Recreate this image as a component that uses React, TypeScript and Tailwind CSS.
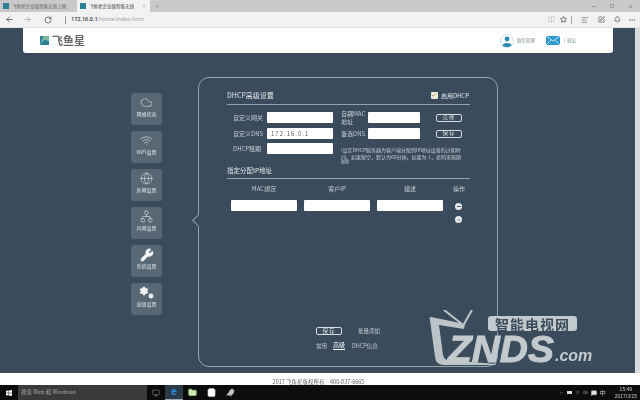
import { ArrowLeft, ArrowRight, RotateCw, Star, BookOpen, Minus, Square, X, Plus, Cloud, Wifi, Globe, Network, Wrench, Settings, Check, AlignLeft, PenSquare, Bell, MoreHorizontal, ChevronUp, Monitor, Volume2, MessageSquare, Folder, ShoppingBag, Bird } from "lucide-react";

const cjk = { fontFamily: '"Noto Sans CJK SC", "Liberation Sans", sans-serif' };

function Field({ w = "w-[66px]", h = "h-[11px]", children }: { w?: string; h?: string; children?: React.ReactNode }) {
  return <div className={`${w} ${h} bg-white rounded-[1px] flex items-center pl-[4px] text-[6px] tracking-[1px] text-[#5a6670]`}>{children}</div>;
}
function Lbl({ w, children }: { w: string; children: React.ReactNode }) {
  return <div className={`${w} text-[6px] leading-[8px] text-[#c3cbd1]`}>{children}</div>;
}
function Btn({ children }: { children: React.ReactNode }) {
  return <div className="w-[26px] h-[8px] border border-[#d5dbdf] rounded-[2px] flex items-center justify-center text-[5.5px] tracking-[1px] text-[#d5dbdf]">{children}</div>;
}
function Gears() {
  return (
    <div className="relative w-[15px] h-[13px]">
      <Settings size={10} strokeWidth={2} className="fill-white" />
      <Settings size={6} strokeWidth={2} className="absolute right-0 bottom-0 fill-white" />
    </div>
  );
}
function Spanner() {
  return <Wrench size={14} strokeWidth={2} className="fill-white -my-[0.5px]" />;
}
function CloudIcon() {
  return <Cloud size={13} strokeWidth={1.1} />;
}
function WifiIcon() {
  return <Wifi size={13} strokeWidth={1.2} />;
}
function GlobeIcon() {
  return <Globe size={13} strokeWidth={1.1} />;
}
function NetIcon() {
  return <Network size={13} strokeWidth={1.1} />;
}
const side = [
  { I: CloudIcon, t: "网络状态" },
  { I: WifiIcon, t: "WiFi设置" },
  { I: GlobeIcon, t: "外网设置" },
  { I: NetIcon, t: "内网设置" },
  { I: Spanner, t: "系统设置" },
  { I: Gears, t: "高级设置" },
];

export default function App() {
  return (
    <div className="w-[640px] h-[400px] overflow-hidden flex flex-col relative blur-[0.35px]" style={cjk}>
      {/* tab strip */}
      <div className="h-[12px] bg-[#c9c9c9] flex items-center shrink-0">
        <div className="w-[77px] h-full flex items-center pl-[3px] gap-[3px] text-[4.5px] text-[#666]">
          <div className="w-[6px] h-[6px] bg-[#2d7f94]" />飞鱼星企业级智能无线上网
        </div>
        <div className="w-[73px] h-full bg-[#f2f2f2] flex items-center pl-[3px] gap-[3px] text-[4.5px] text-[#444]">
          <div className="w-[6px] h-[6px] bg-[#2d7f94]" />飞鱼星企业级智能无线
          <X size={4} className="ml-[5px] text-[#777]" />
        </div>
        <Plus size={5} className="ml-[5px] text-[#8a8a8a]" />
        <div className="ml-auto flex items-center gap-[14px] pr-[7px] text-[#555]">
          <Minus size={5} />
          <Square size={4} />
          <X size={5} />
        </div>
      </div>
      {/* address bar */}
      <div className="h-[16px] bg-[#f2f2f2] flex items-center shrink-0 text-[#444] border-b border-[#e0e0e0]">
        <ArrowLeft size={9} className="ml-[5px]" />
        <ArrowRight size={9} className="ml-[9px] text-[#aaa]" />
        <RotateCw size={8} className="ml-[12px]" />
        <div className="w-px h-[8px] bg-[#999] ml-[13px]" />
        <div className="ml-[5px] text-[5.5px]" style={{ fontFamily: '"Open Sans", sans-serif' }}>
          <span className="text-[#333] font-semibold">172.16.0.1</span><span className="text-[#999]">/home/index.html</span>
        </div>
        <div className="ml-auto flex items-center pr-[4px]">
          <BookOpen size={7} className="text-[#bbb]" />
          <Star size={7} className="ml-[5px] text-[#222]" />
          <div className="w-px h-[8px] bg-[#aaa] ml-[4px]" />
          <AlignLeft size={8} className="ml-[9px] text-[#666]" />
          <PenSquare size={7} className="ml-[9px] text-[#444]" />
          <Bell size={7} className="ml-[9px] text-[#444]" />
          <MoreHorizontal size={8} className="ml-[7px] text-[#777]" />
        </div>
      </div>
      {/* page */}
      <div className="flex-1 bg-[#3a4b5b] flex flex-col min-h-0 relative">
        <div className="flex flex-1 min-h-0">
          <div className="flex-1 flex flex-col min-w-0">
            {/* header */}
            <div className="ml-[23px] w-[590px] h-[25px] bg-white rounded-b-[3px] flex items-center shrink-0">
              <svg viewBox="0 0 10 10" className="ml-[17px] w-[9px] h-[9px]">
                <rect width="10" height="10" fill="#2a8296" />
                <path d="M0 10 L5 4 L10 6 V0 H4 Z" fill="#7fb8a0" />
              </svg>
              <div className="ml-[3px] text-[11px] leading-none font-bold text-[#666]">飞鱼星</div>
              <svg viewBox="0 0 14 14" className="ml-auto w-[14px] h-[14px]">
                <circle cx="7" cy="7" r="6.5" fill="#fff" stroke="#b8d4e4" strokeWidth="0.7" />
                <circle cx="7" cy="5" r="2.4" fill="#2a8bb5" />
                <path d="M2.4 11.5 C3 8 11 8 11.6 11.5 C9 13.5 5 13.5 2.4 11.5Z" fill="#2a8bb5" />
              </svg>
              <div className="ml-[3px] text-[4.5px] text-[#7a8f99]">微信管理</div>
              <svg viewBox="0 0 14 9" className="ml-[11px] w-[14px] h-[9px]">
                <rect width="14" height="9" fill="#2c9ad0" />
                <path d="M0 0 L7 5 L14 0 M0 9 L5 4 M14 9 L9 4" stroke="#fff" strokeWidth="0.7" fill="none" />
              </svg>
              <div className="ml-[4px] mr-[37px] text-[4.5px] text-[#7a8f99]">| &nbsp;退出</div>
            </div>
            {/* body */}
            <div className="flex flex-1 min-h-0 pl-[131px]">
              <div className="w-[31px] mt-[40px] flex flex-col gap-[6px]">
                {side.map(({ I, t }) => (
                  <div key={t} className="w-[31px] h-[32px] rounded-[3px] bg-[#576774] flex flex-col items-center pt-[3px] text-[#dfe4e8]">
                    <I />
                    <div className="text-[5px] leading-[7px] mt-[1px] whitespace-nowrap">{t}</div>
                  </div>
                ))}
              </div>
              {/* panel */}
              <div className="relative ml-[36px] mt-[24px] w-[300px] h-[290px] border border-[#93a3ae] rounded-[11px] pl-[28px] pr-[26px] pt-[11px]">
                <div className="absolute left-[-5px] top-[138px] w-[9px] h-[9px] rotate-45 bg-[#3a4b5b] border-l border-b border-[#93a3ae]" />
                <div className="flex items-center justify-between h-[12px]">
                  <div className="text-[7px] text-[#dfe4e8]">DHCP高级设置</div>
                  <div className="flex items-center gap-[3px] text-[6px] text-[#dfe4e8] pr-[2px]">
                    <div className="w-[7px] h-[7px] rounded-[1px] bg-[#f1ecd6] flex items-center justify-center">
                      <Check size={6} strokeWidth={3} className="text-[#8a8a60]" />
                    </div>
                    启用DHCP
                  </div>
                </div>
                <div className="h-px bg-[#93a3ae] mt-[3px] w-[243px]" />
                {/* form */}
                <div className="mt-[7px] h-[54px] flex items-start">
                  <div className="w-[6px]" />
                  <div className="flex flex-col gap-[5px]">
                    <div className="flex items-center h-[11px]"><Lbl w="w-[34px]">自定义网关</Lbl><Field /></div>
                    <div className="flex items-center h-[11px]"><Lbl w="w-[34px]">自定义DNS</Lbl><Field>172.16.0.1</Field></div>
                    <div className="flex items-center h-[11px] -mt-[1px]"><Lbl w="w-[34px]">DHCP租期</Lbl><Field /></div>
                  </div>
                  <div className="ml-[8px] flex flex-col gap-[5px]">
                    <div className="flex items-center h-[11px]">
                      <Lbl w="w-[27px]">自耦MAC<br />地址</Lbl><Field w="w-[52px]" />
                      <div className="ml-[16px]"><Btn>克隆</Btn></div>
                    </div>
                    <div className="flex items-center h-[11px]">
                      <Lbl w="w-[27px]">备选DNS</Lbl><Field w="w-[52px]" />
                      <div className="ml-[16px]"><Btn>保存</Btn></div>
                    </div>
                    <div className="text-[5px] leading-[6.5px] text-[#c3cbd1] w-[122px] mt-[3px]">
                      !设定DHCP服务器为客户端分配到IP地址设备的过期时间。如果留空，默认为60分钟，如果为-1，表明无限期
                      <span className="block text-[4px] leading-[5px]">更新</span>
                    </div>
                  </div>
                </div>
                <div className="h-[8px] text-[6.5px] leading-[8px] text-[#dfe4e8]">指定分配IP地址</div>
                <div className="h-px bg-[#93a3ae] mt-[4px] w-[243px]" />
                {/* table */}
                <div className="mt-[6px] pl-[4px] flex text-[6px] leading-[8px] text-[#c3cbd1]">
                  <div className="w-[73px] text-center pr-[7px]">MAC绑定</div>
                  <div className="w-[73px] text-center pr-[7px]">客户IP</div>
                  <div className="w-[73px] text-center pr-[7px]">描述</div>
                  <div className="pl-[3px]">操作</div>
                </div>
                <div className="mt-[7px] pl-[4px] flex items-start gap-[7px]">
                  <Field />
                  <Field />
                  <Field />
                  <div className="ml-[5px] mt-[3px] flex flex-col gap-[6px]">
                    <div className="w-[7px] h-[7px] rounded-full bg-[#e8ecee] flex items-center justify-center"><div className="w-[4px] h-px bg-[#556]" /></div>
                    <div className="w-[7px] h-[7px] rounded-full bg-[#e8ecee] flex items-center justify-center"><Plus size={4} className="text-[#556]" /></div>
                  </div>
                </div>
                {/* bottom */}
                <div className="mt-[104px] pl-[89px] flex items-center">
                  <Btn>保存</Btn>
                  <div className="ml-[16px] text-[5.5px] text-[#c3cbd1]">批量添加</div>
                </div>
                <div className="mt-[6px] pl-[89px] flex items-center text-[5.5px] text-[#c3cbd1]">
                  <div className="w-[17px]">常用</div>
                  <div className="w-[12px] mr-[7px] text-[#fff] text-[6px] border-b border-[#fff] leading-[8px]">高级</div>
                  <div>DHCP信息</div>
                </div>
              </div>
            </div>
          </div>
          <div className="w-[5px] bg-[#d9dcde] shrink-0" />
        </div>
        {/* footer */}
        <div className="h-[12px] bg-white shrink-0 flex items-end justify-center">
          <div className="text-[5.5px] leading-[6px] text-[#666] pr-[3px] whitespace-nowrap">2017 飞鱼星版权所有　400-837-6665</div>
        </div>
      </div>
      {/* taskbar */}
      <div className="h-[15px] bg-[#0c0c0c] flex items-center shrink-0 text-[#ddd]">
        <svg viewBox="0 0 10 10" className="ml-[6px] w-[6px] h-[6px]" fill="#fff">
          <path d="M0 1.4 L4.4 .8 V4.7 H0Z M5 .7 L10 0 V4.7 H5Z M0 5.3 H4.4 V9.2 L0 8.6Z M5 5.3 H10 V10 L5 9.3Z" />
        </svg>
        <div className="ml-[6px] w-[129px] h-full bg-[#3a3a3a] flex items-center pl-[3px] text-[5.5px] text-[#a5a5a5]">搜索 Web 和 Windows</div>
        <Monitor size={8} className="ml-[5px] text-[#777]" />
        <div className="ml-[5px] w-[18px] h-full bg-[#2b3a48] flex items-center justify-center border-b border-[#9ab]">
          <span className="text-[10px] leading-none text-[#2b8fe0] font-bold" style={{ fontFamily: '"Liberation Sans", sans-serif' }}>e</span>
        </div>
        <Folder size={9} className="ml-[5px] text-[#a6d08a] fill-[#cfe6b0]" />
        <ShoppingBag size={9} className="ml-[10px] text-white fill-white" />
        <Bird size={9} className="ml-[10px] text-[#ccc] fill-[#bbb]" />
        <div className="ml-auto flex items-center gap-[3px] text-[#ccc]">
          <ChevronUp size={5} />
          <div className="w-[5px] h-[3px] bg-[#ddd]" />
          <Wifi size={5} className="text-[#888]" />
          <Volume2 size={5} />
          <MessageSquare size={6} className="fill-[#ddd]" />
          <span className="text-[6px]">中</span>
          <div className="ml-[6px] mr-[3px] text-[5px] leading-[6.5px] text-center text-[#ccc]" style={{ fontFamily: '"Liberation Sans", sans-serif' }}>15:49<br />2017/3/15</div>
        </div>
      </div>
      {/* watermark */}
      <div className="absolute left-[420px] top-[310px] w-[180px] h-[62px]">
        <svg viewBox="0 0 80 60" className="absolute left-0 top-0 w-[80px] h-[60px]" fill="none">
          <path d="M11 7 Q9 7 10 10 L15 47 Q16 55 24 55 L75 55 L76 54 L27 50 Q24 49 23 45 L19 15 L44 19 L45 14 Z" fill="#bcc4c8" />
          <path d="M24 0 L42 14 M52 0 L44 14" stroke="#bcc4c8" strokeWidth="2" />
          <path d="M75 55 Q77 52 77 46" stroke="#8d9aa3" strokeWidth="0.7" />
        </svg>
        <div className="absolute left-[68px] top-[6px] w-[89px] h-[15px] bg-[#c3cacd] rounded-[3px] flex items-center justify-center text-[14px] leading-none font-bold text-[#3a4b5b] tracking-[1px] whitespace-nowrap">智能电视网</div>
        <div className="absolute left-[28px] top-[25px] origin-left scale-x-[1.08] text-[36px] leading-[30px] italic font-bold text-[#c3cacd] [-webkit-text-stroke:1px_#c3cacd]" style={{ fontFamily: '"Liberation Sans", sans-serif' }}>ZNDS</div>
        <div className="absolute left-[135px] top-[39px] text-[16px] leading-[13px] italic font-bold text-[#c3cacd]" style={{ fontFamily: '"Liberation Sans", sans-serif' }}>.com</div>
      </div>
    </div>
  );
}
